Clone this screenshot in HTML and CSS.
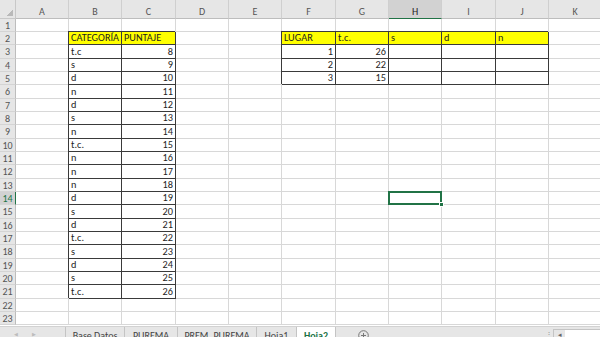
FILE: index.html
```html
<!DOCTYPE html>
<html lang="es">
<head>
    <meta charset="UTF-8">
    <title>Hoja2</title>
    <link rel="stylesheet" href="styles.css">
</head>
<body>
    <div class="sheet">
        <div class="corner"></div>
        <div class="colhead">A</div>
        <div class="colhead">B</div>
        <div class="colhead">C</div>
        <div class="colhead">D</div>
        <div class="colhead">E</div>
        <div class="colhead">F</div>
        <div class="colhead">G</div>
        <div class="colhead on">H</div>
        <div class="colhead">I</div>
        <div class="colhead">J</div>
        <div class="colhead">K</div>

        <div class="rowhead">1</div>
        <div class="rowhead">2</div>
        <div class="rowhead">3</div>
        <div class="rowhead">4</div>
        <div class="rowhead">5</div>
        <div class="rowhead">6</div>
        <div class="rowhead">7</div>
        <div class="rowhead">8</div>
        <div class="rowhead">9</div>
        <div class="rowhead">10</div>
        <div class="rowhead">11</div>
        <div class="rowhead">12</div>
        <div class="rowhead">13</div>
        <div class="rowhead on">14</div>
        <div class="rowhead">15</div>
        <div class="rowhead">16</div>
        <div class="rowhead">17</div>
        <div class="rowhead">18</div>
        <div class="rowhead">19</div>
        <div class="rowhead">20</div>
        <div class="rowhead">21</div>
        <div class="rowhead">22</div>
        <div class="rowhead">23</div>

        <!-- gridlines -->
        <div class="cells"></div>

        <!-- B2:C21 -->
        <div class="tbl tbl-cat">
            <div class="h">CATEGORÍA</div><div class="h">PUNTAJE</div>
            <div>t.c</div><div class="n">8</div>
            <div>s</div><div class="n">9</div>
            <div>d</div><div class="n">10</div>
            <div>n</div><div class="n">11</div>
            <div>d</div><div class="n">12</div>
            <div>s</div><div class="n">13</div>
            <div>n</div><div class="n">14</div>
            <div>t.c.</div><div class="n">15</div>
            <div>n</div><div class="n">16</div>
            <div>n</div><div class="n">17</div>
            <div>n</div><div class="n">18</div>
            <div>d</div><div class="n">19</div>
            <div>s</div><div class="n">20</div>
            <div>d</div><div class="n">21</div>
            <div>t.c.</div><div class="n">22</div>
            <div>s</div><div class="n">23</div>
            <div>d</div><div class="n">24</div>
            <div>s</div><div class="n">25</div>
            <div>t.c.</div><div class="n">26</div>
        </div>

        <!-- F2:J5 -->
        <div class="tbl tbl-lugar">
            <div class="h">LUGAR</div><div class="h">t.c.</div><div class="h">s</div><div class="h">d</div><div class="h">n</div>
            <div class="n">1</div><div class="n">26</div><div></div><div></div><div></div>
            <div class="n">2</div><div class="n">22</div><div></div><div></div><div></div>
            <div class="n">3</div><div class="n">15</div><div></div><div></div><div></div>
        </div>

        <div class="sel"><span class="handle"></span></div>
    </div>

    <div class="tabs">
        <div class="nav"><span>&#9664;</span><span>&#9654;</span></div>
        <div class="tab t-base">Base Datos</div>
        <div class="tab t-purema">PUREMA</div>
        <div class="tab t-prem">PREM_PUREMA</div>
        <div class="tab t-hoja1">Hoja1</div>
        <div class="tab t-hoja2 on">Hoja2</div>
        <div class="add">
            <svg width="11" height="11" viewBox="0 0 11 11">
                <circle cx="5.5" cy="5.5" r="4.8" fill="none" stroke="#777" stroke-width="1"/>
                <path d="M5.5 3v5M3 5.5h5" stroke="#777" stroke-width="1"/>
            </svg>
        </div>
        <div class="spacer"></div>
        <div class="dots">&#8942;</div>
        <div class="scroll"><span>&#9666;</span></div>
        <div class="track"></div>
    </div>
</body>
</html>
```

FILE: styles.css
```css
html, body {
    margin: 0;
    height: 337px;
    overflow: hidden;
    background-color: #fff;
}

body {
    font-family: "Carlito", "Liberation Sans", Arial, sans-serif;
    color: #1e1e1e;
}

.sheet {
    display: grid;
    grid-template-columns: 16px repeat(3, 53px 53px 54px) 53px 53px;
    grid-template-rows: 19px repeat(7, 13px 13px 14px) 13px 13px;
    width: 602px;
}

.corner {
    background: #e6e6e6 linear-gradient(to top left, #b9b9b9 50%, transparent 50%) no-repeat right 2px bottom 2px / 7px 7px;
    border-right: 1px solid #c8c8c8;
    border-bottom: 1px solid #c8c8c8;
}

.colhead,
.rowhead {
    box-sizing: border-box;
    background-color: #e6e6e6;
    color: #555;
    font-size: 10px;
    display: flex;
    align-items: center;
    justify-content: center;
}

.colhead {
    padding-top: 5px;
    border-right: 1px solid #cfcfcf;
    border-bottom: 1px solid #bdbdbd;
}

.rowhead {
    grid-column: 1;
    border-right: 1px solid #bdbdbd;
    border-bottom: 1px solid #d4d4d4;
}

.colhead.on {
    background-color: #d2d2d2;
    color: #222;
    border-bottom-color: #217346;
}

.rowhead.on {
    background-color: #d2d2d2;
    color: #217346;
    border-right-color: #217346;
}

.cells {
    grid-column: 2 / -1;
    grid-row: 2 / -1;
    background-image:
        linear-gradient(to right, transparent 52px, #d8d8d8 52px 53px, transparent 53px 105px, #d8d8d8 105px 106px, transparent 106px 159px, #d8d8d8 159px),
        linear-gradient(to bottom, transparent 12px, #d8d8d8 12px 13px, transparent 13px 25px, #d8d8d8 25px 26px, transparent 26px 39px, #d8d8d8 39px);
    background-size: 160px 100%, 100% 40px;
}

.tbl {
    display: grid;
    grid-template-columns: subgrid;
    grid-template-rows: subgrid;
    background-color: #fff;
    box-shadow: -1px -1px 0 #3a3a3a;
}

.tbl-cat {
    grid-column: 3 / 5;
    grid-row: 3 / 23;
}

.tbl-lugar {
    grid-column: 7 / 12;
    grid-row: 3 / 7;
}

.tbl > div {
    box-sizing: border-box;
    border-right: 1px solid #3a3a3a;
    border-bottom: 1px solid #3a3a3a;
    padding: 0 2px 0 2px;
    font-size: 10.3px;
    line-height: 12px;
    white-space: nowrap;
    overflow: hidden;
    display: flex;
    align-items: flex-end;
}

.tbl > .h {
    background-color: #ffff00;
}

.tbl > .n {
    justify-content: flex-end;
}

.sel {
    grid-column: 9;
    grid-row: 15;
    margin: -1px 0 0 -1px;
    border: 2px solid #217346;
    position: relative;
}

.handle {
    position: absolute;
    right: -4px;
    bottom: -4px;
    width: 5px;
    height: 5px;
    background-color: #217346;
    border: 1px solid #fff;
    box-sizing: border-box;
}

.tabs {
    display: flex;
    height: 20px;
    margin-top: 1px;
    background-color: #e6e6e6;
    border-top: 1px solid #d2d2d2;
    font-size: 10px;
    color: #444;
}

.nav {
    width: 66px;
    display: flex;
    gap: 14px;
    padding: 4px 0 0 14px;
    box-sizing: border-box;
    color: #bcbcbc;
    font-size: 5px;
    border-right: 1px solid #c4c4c4;
}

.tab {
    box-sizing: border-box;
    padding-top: 2px;
    text-align: center;
    border-right: 1px solid #c4c4c4;
}

.t-base { width: 59px; }
.t-purema { width: 53px; }
.t-prem { width: 79px; }
.t-hoja1 { width: 40px; }

.t-hoja2 {
    width: 39px;
    background-color: #fff;
    color: #217346;
    font-weight: bold;
}

.add {
    width: 54px;
    padding-top: 3px;
    text-align: center;
}

.spacer {
    flex: 1;
}

.dots {
    width: 8px;
    color: #999;
    font-size: 8px;
    padding-top: 2px;
}

.scroll {
    width: 12px;
    box-sizing: border-box;
    border: 1px solid #c4c4c4;
    border-right: none;
    margin-top: 2px;
    color: #666;
    font-size: 7px;
    text-align: center;
}

.track {
    width: 35px;
    margin-top: 2px;
    background-color: #fff;
    border-top: 1px solid #c4c4c4;
}
```
